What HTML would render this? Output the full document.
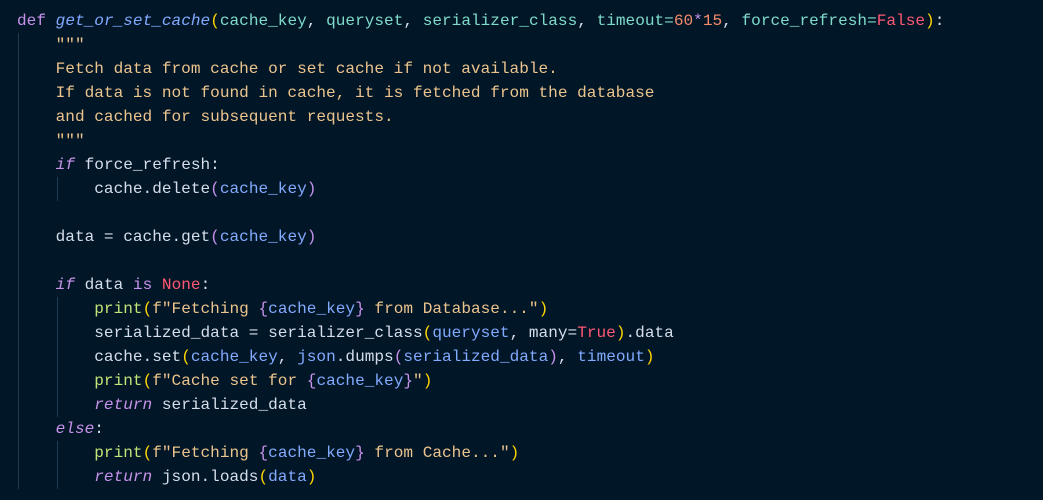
<!DOCTYPE html>
<html><head><style>
html,body{margin:0;padding:0;background:#011627;width:1043px;height:500px;overflow:hidden}
pre{margin:0;position:absolute;left:17px;top:9px;font-family:"Liberation Mono",monospace;font-size:16.1px;line-height:24px;color:#d6deeb;white-space:pre}
.k{color:#c792ea}.i{font-style:italic}.f{color:#82aaff}.p{color:#7fdbca}.y{color:#ffd700}.s{color:#ecc48d}.r{color:#ff5874}.n{color:#f78c6c}.g{color:#c5e478}
.guide{position:absolute;width:1px;background:#1d3b53}
</style></head><body>
<div class="guide" style="left:18px;top:33px;height:456px"></div>
<div class="guide" style="left:57px;top:177px;height:24px"></div>
<div class="guide" style="left:57px;top:297px;height:120px"></div>
<div class="guide" style="left:57px;top:441px;height:48px"></div>
<pre><span class="k">def</span> <span class="f i">get_or_set_cache</span><span class="y">(</span><span class="p">cache_key</span>, <span class="p">queryset</span>, <span class="p">serializer_class</span>, <span class="p">timeout</span><span class="p">=</span><span class="n">60</span><span class="k">*</span><span class="n">15</span>, <span class="p">force_refresh</span><span class="p">=</span><span class="r">False</span><span class="y">)</span>:
<span class="s">    """
    Fetch data from cache or set cache if not available.
    If data is not found in cache, it is fetched from the database
    and cached for subsequent requests.
    """</span>
    <span class="k i">if</span> force_refresh:
        cache.delete<span class="k">(</span><span style="color:#82aaff">cache_key</span><span class="k">)</span>

    data = cache.get<span class="k">(</span><span style="color:#82aaff">cache_key</span><span class="k">)</span>

    <span class="k i">if</span> data <span class="k">is</span> <span class="r">None</span>:
        <span class="g">print</span><span class="y">(</span><span class="s">f"Fetching </span><span class="k">{</span><span style="color:#82aaff">cache_key</span><span class="k">}</span><span class="s"> from Database..."</span><span class="y">)</span>
        serialized_data = serializer_class<span class="y">(</span><span style="color:#82aaff">queryset</span>, many=<span class="r">True</span><span class="y">)</span>.data
        cache.set<span class="y">(</span><span style="color:#82aaff">cache_key</span>, <span style="color:#82aaff">json</span>.dumps<span class="k">(</span><span style="color:#82aaff">serialized_data</span><span class="k">)</span>, <span style="color:#82aaff">timeout</span><span class="y">)</span>
        <span class="g">print</span><span class="y">(</span><span class="s">f"Cache set for </span><span class="k">{</span><span style="color:#82aaff">cache_key</span><span class="k">}</span><span class="s">"</span><span class="y">)</span>
        <span class="k i">return</span> serialized_data
    <span class="k i">else</span>:
        <span class="g">print</span><span class="y">(</span><span class="s">f"Fetching </span><span class="k">{</span><span style="color:#82aaff">cache_key</span><span class="k">}</span><span class="s"> from Cache..."</span><span class="y">)</span>
        <span class="k i">return</span> json.loads<span class="y">(</span><span style="color:#82aaff">data</span><span class="y">)</span>
</pre>
</body></html>
